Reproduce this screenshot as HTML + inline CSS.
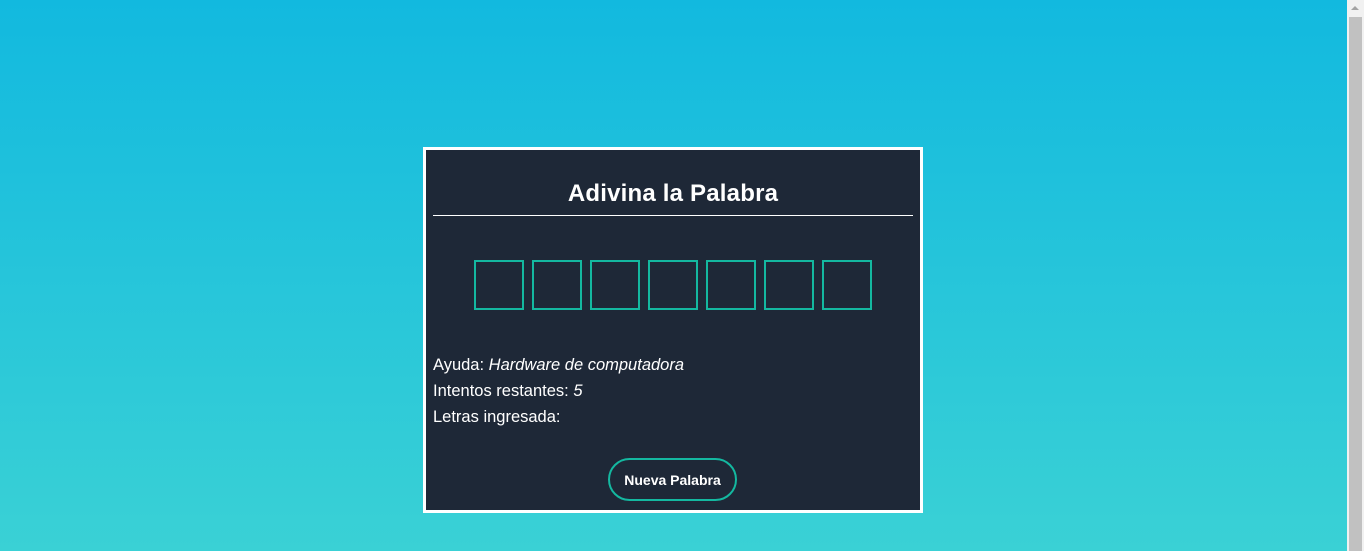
<!DOCTYPE html>
<html><head><style>
html,body{margin:0;padding:0;width:1364px;height:551px;overflow:hidden;font-family:"Liberation Sans",sans-serif}
.bg{position:absolute;left:0;top:0;width:1347px;height:551px;background:linear-gradient(#12b9df,#3ad1d5)}
.sb{position:absolute;left:1347px;top:0;width:17px;height:551px;background:#f1f1f1}
.th{position:absolute;left:2px;top:17px;width:13px;height:534px;background:#c1c1c1}
.ar{position:absolute;left:4px;top:6px;width:0;height:0;border-left:4px solid transparent;border-right:4px solid transparent;border-bottom:4px solid #a3a3a3}
.card{position:absolute;left:423px;top:147px;width:494px;height:360px;border:3px solid #fff;background:#1e2837;color:#fff}
h1{position:absolute;left:0;width:494px;top:30px;margin:0;text-align:center;font-size:24px;font-weight:bold;letter-spacing:0.2px}
.hr{position:absolute;left:7px;top:65px;width:480px;height:1px;background:#fff}
.box{position:absolute;top:110px;width:46px;height:46px;border:2px solid #14b8a0}
.t{position:absolute;left:7px;font-size:16.5px}
.btn{position:absolute;left:182px;top:308px;width:125px;height:39px;border:2px solid #14b8a0;border-radius:22px;font-size:14px;font-weight:bold;text-align:center;line-height:41px}
</style></head><body>
<div class="bg"></div><div class="sb"><div class="ar"></div><div class="th"></div></div>
<div class="card">
<h1>Adivina la Palabra</h1>
<div class="hr"></div>
<div class="box" style="left:48px"></div>
<div class="box" style="left:106px"></div>
<div class="box" style="left:164px"></div>
<div class="box" style="left:222px"></div>
<div class="box" style="left:280px"></div>
<div class="box" style="left:338px"></div>
<div class="box" style="left:396px"></div>
<div class="t" style="top:206px">Ayuda: <i>Hardware de computadora</i></div>
<div class="t" style="top:232px">Intentos restantes: <i>5</i></div>
<div class="t" style="top:258px">Letras ingresada:</div>
<div class="btn">Nueva Palabra</div>
</div>
</body></html>
